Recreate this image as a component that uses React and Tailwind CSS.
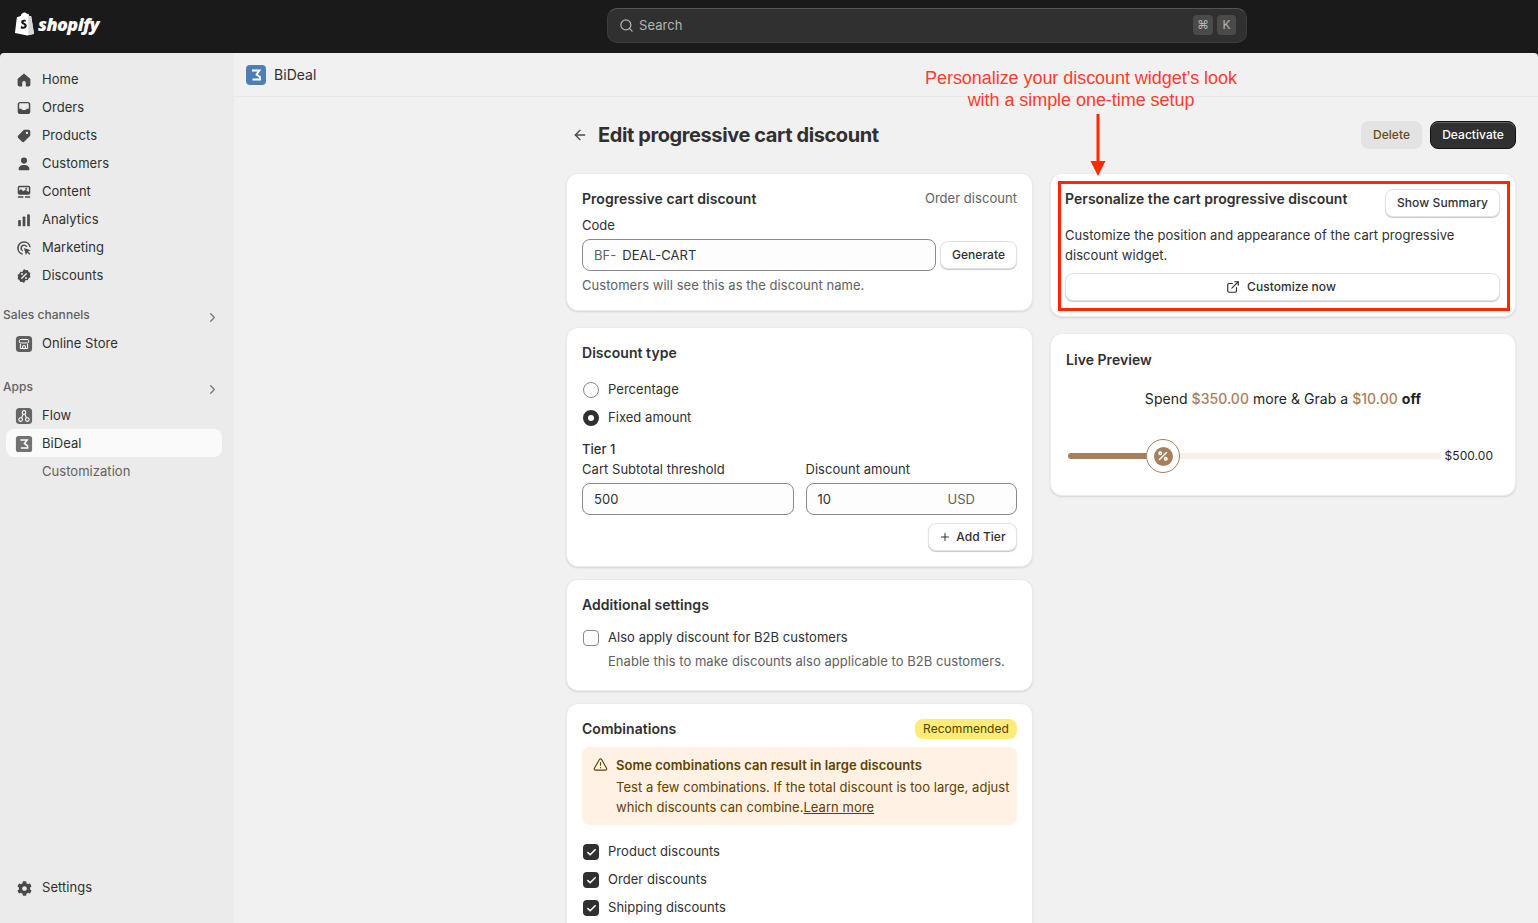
import { ChevronRight, ArrowLeft, ExternalLink, Search, Plus, Check, TriangleAlert, Percent } from 'lucide-react';
import { FaCog } from 'react-icons/fa';

function Glyph({ children }) {
  return (
    <svg viewBox="0 0 20 20" className="w-[18px] h-[18px] shrink-0 text-[#4a4a4a]" fill="currentColor">
      {children}
    </svg>
  );
}

const navIcons = {
  home: <path d="M10 2.8 3.4 8.2c-.3.3-.5.6-.5 1V15a2.2 2.2 0 0 0 2.2 2.2H8v-4a2 2 0 0 1 4 0v4h2.900a2.200 2.200 0 0 0 2.200-2.200V9.200c0-.4-.2-.7-.5-1L10 2.800Z" />,
  orders: (
    <>
      <rect x="3" y="3.200" width="14" height="13.600" rx="3" />
      <path d="M4.700 5.800c0-.6.5-1 1-1h8.600c.5 0 1 .4 1 1v5h-2.400l-1 1.500H8.100l-1-1.500H4.700v-5Z" fill="#ebebeb" />
    </>
  ),
  products: (
    <path fillRule="evenodd" d="M11.200 3h3.800A2 2 0 0 1 17 5v3.800c0 .5-.2 1-.6 1.400l-6 6a2 2 0 0 1-2.800 0l-4-4a2 2 0 0 1 0-2.800l6-6c.4-.3.900-.4 1.600-.4ZM13.300 5.300a1.300 1.300 0 1 0 0 2.600 1.300 1.300 0 0 0 0-2.600Z" />
  ),
  customers: (
    <>
      <circle cx="10" cy="6.200" r="3.400" />
      <path d="M4 15.500c0-2.800 2.600-4.500 6-4.500s6 1.700 6 4.500c0 .8-.6 1.500-1.500 1.500h-9C4.600 17 4 16.300 4 15.500Z" />
    </>
  ),
  content: (
    <>
      <path fillRule="evenodd" d="M5 3h10a2 2 0 0 1 2 2v6a2 2 0 0 1-2 2H5a2 2 0 0 1-2-2V5a2 2 0 0 1 2-2Zm.2 1.600c-.4 0-.6.3-.6.600v3.300l2-1.800 2.600 2.400 2.300-1.600 3.900 2.600V5.200c0-.3-.2-.6-.6-.6H5.200Z" />
      <circle cx="12.500" cy="6.500" r="1.100" />
      <rect x="3" y="14.800" width="6.500" height="1.600" rx=".8" />
      <rect x="11" y="14.800" width="6" height="1.600" rx=".8" />
    </>
  ),
  analytics: (
    <>
      <rect x="3.500" y="10" width="3" height="7" rx="1" />
      <rect x="8.500" y="6" width="3" height="11" rx="1" />
      <rect x="13.500" y="3.500" width="3" height="13.500" rx="1" />
    </>
  ),
  marketing: (
    <>
      <path d="M10 2.500a7.500 7.500 0 0 0-1.300 14.900l-.4-1.600A5.900 5.900 0 1 1 15.900 9l1.600.4A7.500 7.500 0 0 0 10 2.500Z" />
      <path d="M10 6a4 4 0 0 0-1.200 7.800l-.5-1.900A2.300 2.300 0 1 1 12 8.500l1.900.5A4 4 0 0 0 10 6Z" />
      <path d="m10 10 7.500 2.600-3 1.400 2.500 2.500-1 1-2.500-2.500-1.400 3L10 10Z" />
    </>
  ),
  discounts: (
    <>
      <path d="M10 2.200l1.900 1.300 2.300-.1.900 2.100 2 1.200-.5 2.300.5 2.300-2 1.200-.9 2.100-2.300-.1L10 17.800l-1.900-1.300-2.300.1-.9-2.100-2-1.200.5-2.300-.5-2.300 2-1.200.9-2.100 2.300.1L10 2.200Z" />
      <path d="m7.500 12.500 5-5" stroke="#ebebeb" strokeWidth="1.500" strokeLinecap="round" />
      <circle cx="7.800" cy="7.800" r="1.100" fill="#ebebeb" />
      <circle cx="12.200" cy="12.200" r="1.100" fill="#ebebeb" />
    </>
  ),
  store: (
    <>
      <rect x="1" y="1" width="18" height="18" rx="4" fill="#5f5f5f" />
      <path d="M5.500 5h9l.8 2.500a1.700 1.700 0 0 1-2.900 1 1.900 1.900 0 0 1-2.400.2 1.900 1.900 0 0 1-2.400-.2 1.700 1.700 0 0 1-2.900-1L5.500 5Z" fill="none" stroke="#fff" strokeWidth="1.100" />
      <path d="M6 10v5h8v-5M8.500 15v-3h3v3" fill="none" stroke="#fff" strokeWidth="1.100" />
    </>
  ),
  flow: (
    <>
      <rect x="1" y="1" width="18" height="18" rx="4" fill="#666" />
      <circle cx="10" cy="6" r="2" fill="none" stroke="#fff" strokeWidth="1.200" />
      <circle cx="6.300" cy="14" r="2" fill="none" stroke="#fff" strokeWidth="1.200" />
      <circle cx="13.700" cy="14" r="2" fill="none" stroke="#fff" strokeWidth="1.200" />
      <path d="M9.200 7.800 7.200 12.200M10.800 7.800l2 4.400" fill="none" stroke="#fff" strokeWidth="1.200" />
    </>
  ),
  bideal: (
    <>
      <rect x="1" y="1" width="18" height="18" rx="3" fill="#727272" />
      <path d="M6 5.500h7.500l-3 4 3.500 2.500v2.500H6.500" fill="none" stroke="#fff" strokeWidth="1.700" />
    </>
  ),
};

function NavItem({ icon, label, active, muted }) {
  return (
    <div className={`h-7 flex items-center gap-[8px] pl-[10px] rounded-lg ml-[6px] mr-3 ${active ? 'bg-[#fafafa] text-[#1a1a1a] -mt-px mb-px pt-[2px]' : ''} ${muted ? 'text-[#616161]' : 'text-[#303030]'}`}>
      <span className="w-5 h-5 -ml-[2px] flex items-center justify-center">
        {icon ? <Glyph>{navIcons[icon]}</Glyph> : null}
      </span>
      <span>{label}</span>
    </div>
  );
}

function SectionLabel({ label }) {
  return (
    <div className="h-7 flex items-center justify-between pl-[3px] pr-[14px] text-[12px] font-medium text-[#616161]">
      <span>{label}</span>
      <ChevronRight size={15} className="mt-1 text-[#777]" />
    </div>
  );
}

function Sidebar() {
  return (
    <aside className="w-[234px] shrink-0 bg-[#ebebeb] flex flex-col pt-[13px] pb-[21px]">
      <NavItem icon="home" label="Home" />
      <NavItem icon="orders" label="Orders" />
      <NavItem icon="products" label="Products" />
      <NavItem icon="customers" label="Customers" />
      <NavItem icon="content" label="Content" />
      <NavItem icon="analytics" label="Analytics" />
      <NavItem icon="marketing" label="Marketing" />
      <NavItem icon="discounts" label="Discounts" />
      <div className="mt-[11px] mb-px">
        <SectionLabel label="Sales channels" />
      </div>
      <NavItem icon="store" label="Online Store" />
      <div className="mt-[15px] mb-px">
        <SectionLabel label="Apps" />
      </div>
      <NavItem icon="flow" label="Flow" />
      <NavItem icon="bideal" label="BiDeal" active />
      <NavItem label="Customization" muted />
      <div className="mt-auto h-7 flex items-center gap-[8px] pl-[16px] text-[#303030]">
        <span className="w-5 h-5 -ml-[2px] flex items-center justify-center">
          <FaCog size={15} className="text-[#4a4a4a]" />
        </span>
        Settings
      </div>
    </aside>
  );
}

function Card({ children, className = '' }) {
  return (
    <div className={`bg-white rounded-xl border border-[#ebebeb] shadow-[0_1px_2px_rgba(0,0,0,0.12)] ${className}`}>
      {children}
    </div>
  );
}

function Button({ children, className = '' }) {
  return (
    <div className={`h-7 flex items-center justify-center gap-1 bg-white rounded-lg border border-[#e3e3e3] shadow-[0_1px_1px_rgba(0,0,0,0.22)] text-[12px] font-medium text-[#303030] ${className}`}>
      {children}
    </div>
  );
}

function Field({ children, className = '' }) {
  return (
    <div className={`h-8 flex items-center px-[11px] pt-px bg-[#fdfdfd] rounded-lg border border-[#8a8a8a] ${className}`}>
      {children}
    </div>
  );
}

function Radio({ label, checked }) {
  return (
    <div className="h-7 flex items-center gap-[9px] pl-px">
      {checked ? (
        <span className="w-4 h-4 rounded-full border-[5px] border-[#303030] bg-white" />
      ) : (
        <span className="w-4 h-4 rounded-full border border-[#8a8a8a] bg-[#fdfdfd]" />
      )}
      {label}
    </div>
  );
}

function CheckRow({ label }) {
  return (
    <div className="h-7 flex items-center gap-[9px] pl-px">
      <span className="w-4 h-4 rounded-[4px] bg-[#303030] flex items-center justify-center">
        <Check size={11} strokeWidth={3.500} className="text-white" />
      </span>
      {label}
    </div>
  );
}

function Annotation() {
  return (
    <div className="absolute inset-0 pointer-events-none">
      <div className="absolute left-[831px] top-[67px] w-[500px] text-center font-['Liberation_Sans',sans-serif] text-[18px] leading-[22px] tracking-[-0.05px] text-[#ff3b30]">
        Personalize your discount widget’s look
        <br />
        with a simple one-time setup
      </div>
      <svg className="absolute left-[1090px] top-[114px]" width="16" height="62" viewBox="0 0 16 62">
        <path d="M6.500 0h3v47h6L8 62 .5 47h6Z" fill="#ff2a00" />
      </svg>
      <div className="absolute left-[1058px] top-[181px] w-[452px] h-[130px] border-[3px] border-[#ff2600]" />
    </div>
  );
}

export default function App() {
  return (
    <div className="h-[923px] overflow-hidden relative bg-[#1a1a1a] font-['Inter',sans-serif] text-[13px] tracking-[0.04px] text-[#303030] flex flex-col">
      <header className="h-[53px] shrink-0 relative flex items-center pl-[607px] pb-[3px]">
        <div className="absolute left-[14px] top-[12px] flex items-center gap-[3px]">
          <svg viewBox="0 0 22 25" className="w-[21px] h-[24px]">
            <path d="M3 5.500 7 4.200C7.500 2 9.300.5 11 .5c1.200 0 2 .6 2.500 1.500l1.500-.3L16 4l2 .5L21 23l-7 1.500L1 22 3 5.500Z" fill="#fff" />
            <path d="M15 2v22l6-1.300L18 4.500 16 4l-1-2Z" fill="#d8d8d8" />
            <path d="M12.500 8.500c-2.500-1-5-.2-5 2 0 2.500 3.500 2.500 3.500 4 0 1.200-2 1-3.500.2l-.6 2.200c2.500 1.200 6.500.8 6.500-2.500 0-2.800-3.400-2.800-3.400-4 0-.8 1.300-.8 2.300-.3l.2-1.600Z" fill="#1a1a1a" />
          </svg>
          <span className="font-['Open_Sans',sans-serif] font-extrabold italic text-white text-[18px] tracking-[-0.6px] leading-none">shopify</span>
        </div>
        <div className="w-[640px] h-[35px] flex items-center rounded-[10px] bg-[#303030] border border-[#3d3d3d] border-t-[#555] pl-[11px] pr-[10px] text-[#b5b5b5] text-[13px]">
          <Search size={15} className="mr-[5px]" />
          <span className="pt-[2px]">Search</span>
          <span className="ml-auto w-[20px] h-5 rounded bg-[#4a4a4a] flex items-center justify-center text-[12px]">⌘</span>
          <span className="ml-[4px] w-[19px] h-5 rounded bg-[#4a4a4a] flex items-center justify-center text-[12px]">K</span>
        </div>
      </header>

      <div className="flex-1 min-h-0 flex rounded-t-[4px] overflow-hidden">
        <Sidebar />
        <main className="flex-1 bg-[#f1f1f1] relative">
          <div className="h-[44px] border-b border-[#e8e8e8] flex items-center gap-2 pl-3 text-[14px] text-[#303030]">
            <span className="w-5 h-5 rounded-[4px] bg-[#4c80b5] flex items-center justify-center">
              <svg viewBox="0 0 20 20" className="w-5 h-5">
                <path d="M6 5.500h7.500l-3 4 3.500 2.500v2.500H6.500" fill="none" stroke="#fff" strokeWidth="1.800" />
              </svg>
            </span>
            BiDeal
          </div>

          <div className="ml-[332px] mr-[22px]">
            <div className="h-[76px] flex items-center">
              <ArrowLeft size={16} className="text-[#4a4a4a] ml-[6px] mr-[10px] -mt-px" />
              <h1 className="text-[20px] font-bold tracking-[-0.4px] text-[#303030]">Edit progressive cart discount</h1>
              <div className="ml-auto flex items-center gap-2">
                <div className="h-7 w-[61px] rounded-lg bg-[#e3e3e3] flex items-center justify-center text-[12px] font-medium text-[#6b4a14]">Delete</div>
                <div className="h-7 w-[86px] rounded-lg bg-[#303030] border border-[#111] shadow-[inset_0_1px_0_rgba(255,255,255,0.25)] flex items-center justify-center text-[12px] font-medium text-white">Deactivate</div>
              </div>
            </div>

            <div className="flex gap-[17px] items-start">
              <div className="w-[467px] shrink-0 flex flex-col">
                <Card className="h-[138px] px-[15px] pt-[15px]">
                  <div className="h-[19px] flex items-center justify-between">
                    <span className="font-semibold text-[14px]">Progressive cart discount</span>
                    <span className="text-[#616161]">Order discount</span>
                  </div>
                  <div className="mt-[10px] h-4 flex items-center">Code</div>
                  <div className="mt-[5px] flex items-center gap-1">
                    <Field className="flex-1 gap-[6px]">
                      <span className="text-[#616161]">BF-</span>
                      <span>DEAL-CART</span>
                    </Field>
                    <Button className="w-[77px]">Generate</Button>
                  </div>
                  <div className="mt-[5px] text-[#616161]">Customers will see this as the discount name.</div>
                </Card>

                <Card className="mt-[16px] h-[240px] px-[15px] pt-[14px]">
                  <div className="h-5 flex items-center font-semibold text-[14px]">Discount type</div>
                  <div className="mt-[14px]">
                    <Radio label="Percentage" />
                    <Radio label="Fixed amount" checked />
                  </div>
                  <div className="mt-[8px] font-medium leading-[18px]">Tier 1</div>
                  <div className="grid grid-cols-2 gap-3 mt-[2px]">
                    <div>
                      <div className="leading-[18px] mb-[5px]">Cart Subtotal threshold</div>
                      <Field>500</Field>
                    </div>
                    <div>
                      <div className="leading-[18px] mb-[5px]">Discount amount</div>
                      <Field className="justify-between pr-[41px]">
                        <span>10</span>
                        <span className="text-[#616161]">USD</span>
                      </Field>
                    </div>
                  </div>
                  <div className="mt-[8px] flex justify-end">
                    <Button className="w-[89px] gap-[5px]">
                      <Plus size={12} />
                      Add Tier
                    </Button>
                  </div>
                </Card>

                <Card className="mt-[12px] h-[112px] px-[15px] pt-[14px]">
                  <div className="h-5 flex items-center font-semibold text-[14px]">Additional settings</div>
                  <div className="mt-[10px] h-7 flex items-center gap-[9px] pl-px">
                    <span className="w-4 h-4 rounded-[4px] border border-[#8a8a8a] bg-[#fdfdfd]" />
                    Also apply discount for B2B customers
                  </div>
                  <div className="pl-[26px] text-[#616161]">Enable this to make discounts also applicable to B2B customers.</div>
                </Card>

                <Card className="mt-[12px] h-[300px] px-[15px] pt-[14px]">
                  <div className="flex items-start justify-between">
                    <span className="h-5 flex items-center font-semibold text-[14px]">Combinations</span>
                    <span className="mt-px h-5 w-[102px] rounded-lg bg-[#ffeb78] flex items-center justify-center text-[12px] text-[#4f4200]">Recommended</span>
                  </div>
                  <div className="mt-[8px] h-[78px] rounded-lg bg-[#fff1e3] pt-[8px] pl-[11px] pr-1 flex gap-[8px] text-[#5e4200]">
                    <TriangleAlert size={15} strokeWidth={1.800} className="mt-[2px] shrink-0" />
                    <div className="leading-5">
                      <div className="font-semibold h-[20px]">Some combinations can result in large discounts</div>
                      <div className="mt-[2px]">
                        Test a few combinations. If the total discount is too large, adjust which discounts can combine.
                        <span className="underline">Learn more</span>
                      </div>
                    </div>
                  </div>
                  <div className="mt-[13px]">
                    <CheckRow label="Product discounts" />
                    <CheckRow label="Order discounts" />
                    <CheckRow label="Shipping discounts" />
                  </div>
                </Card>
              </div>

              <div className="w-[466px] shrink-0 flex flex-col">
                <Card className="h-[144px] pl-[14px] pr-[15px] pt-[14px]">
                  <div className="flex justify-between items-start">
                    <span className="font-semibold text-[14px] leading-[20px] mt-px">Personalize the cart progressive discount</span>
                    <Button className="w-[115px] mt-px tracking-[0.1px]">Show Summary</Button>
                  </div>
                  <div className="mt-[8px] leading-5 pr-8">Customize the position and appearance of the cart progressive discount widget.</div>
                  <Button className="mt-2 w-full gap-[7px] pr-[3px]">
                    <ExternalLink size={14} />
                    Customize now
                  </Button>
                </Card>

                <Card className="mt-[16px] h-[163px] px-[15px] pt-[15px]">
                  <div className="h-5 flex items-center font-semibold text-[14px]">Live Preview</div>
                  <div className="mt-[20px] text-center text-[14px] leading-5 text-[#1f1f1f]">
                    Spend <span className="font-medium text-[#a67f5d]">$350.00</span> more &amp; Grab a <span className="font-medium text-[#a67f5d]">$10.00</span> <span className="font-bold">off</span>
                  </div>
                  <div className="mt-[30px] flex items-center pl-[2px] pr-[7px]">
                    <span className="w-[78px] h-[6px] rounded-l-full bg-[#a67f5d]" />
                    <span className="w-[34px] h-[34px] shrink-0 rounded-full bg-white border border-[#a67f5d] flex items-center justify-center">
                      <span className="w-[19px] h-[19px] rounded-full bg-[#a67f5d] flex items-center justify-center">
                        <Percent size={12} strokeWidth={3} className="text-white" />
                      </span>
                    </span>
                    <span className="flex-1 h-[6px] rounded-r-full bg-[#f6eee7]" />
                    <span className="ml-1 text-[12px] text-[#1f1f1f]">$500.00</span>
                  </div>
                </Card>
              </div>
            </div>
          </div>
        </main>
      </div>
      <Annotation />
    </div>
  );
}
